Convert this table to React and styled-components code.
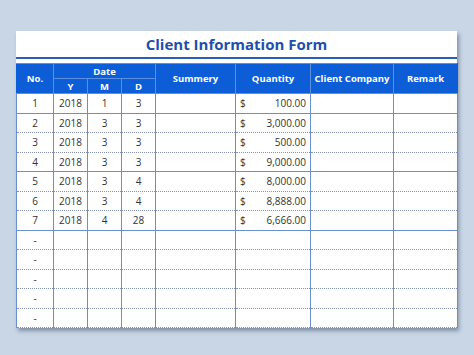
import React from "react";
import styled, { createGlobalStyle } from "styled-components";

const Global = createGlobalStyle`
  html, body { margin: 0; padding: 0; }
  body {
    background: #c9d6e6;
    width: 474px;
    height: 355px;
    overflow: hidden;
    font-family: "Open Sans", "Noto Sans", sans-serif;
  }
`;

const Page = styled.div`
  padding: 31px 0 0 16px;
`;

const Card = styled.div`
  width: 441px;
  background: #fff;
  box-shadow: 2px 3px 4px rgba(40, 60, 90, 0.45);
`;

const TitleBar = styled.div`
  height: 26px;
  display: flex;
  align-items: center;
  justify-content: center;
  border-bottom: 2px solid #2a5cc0;
  margin-bottom: 4px;
`;

const Title = styled.h1`
  margin: 0;
  font-size: 15px;
  font-weight: 700;
  color: #1e4fae;
  letter-spacing: 0;
`;

const Table = styled.table`
  width: 441px;
  table-layout: fixed;
  border-collapse: collapse;
  font-size: 10px;
`;

const HeadCell = styled.th`
  background: #0d5ed6;
  color: #fff;
  font-weight: 700;
  font-size: 9.5px;
  height: 14px;
  padding: 0;
  border: 1px solid #5a90e2;
  text-align: center;
  white-space: nowrap;
  &:first-child { border-left-color: #0d5ed6; }
  &:last-child { border-right-color: #0d5ed6; }
`;

const Row = styled.tr`
  height: 19.5px;
`;

const Cell = styled.td`
  padding: 0 ${(p) => (p.$pad ? "4px" : "0")};
  color: #333;
  text-align: ${(p) => p.$align || "center"};
  border-left: 1px solid ${(p) => (p.$gray ? "#98a4bb" : "#6b8fce")};
  border-right: 1px solid #6b8fce;
  border-bottom: 1px ${(p) => (p.$solid ? "solid #6b8fce" : "dotted #8593b4")};
  white-space: nowrap;
  overflow: hidden;
`;

const Money = styled.div`
  display: flex;
  justify-content: space-between;
  align-items: center;
`;

const rows = [
  ["1", "2018", "1", "3", "100.00"],
  ["2", "2018", "3", "3", "3,000.00"],
  ["3", "2018", "3", "3", "500.00"],
  ["4", "2018", "3", "3", "9,000.00"],
  ["5", "2018", "3", "4", "8,000.00"],
  ["6", "2018", "3", "4", "8,888.00"],
  ["7", "2018", "4", "28", "6,666.00"],
  ["-", "", "", "", ""],
  ["-", "", "", "", ""],
  ["-", "", "", "", ""],
  ["-", "", "", "", ""],
  ["-", "", "", "", ""],
];

export default function App() {
  return (
    <>
      <Global />
      <Page>
        <Card>
          <TitleBar>
            <Title>Client Information Form</Title>
          </TitleBar>
          <Table>
            <colgroup>
              <col style={{ width: 37 }} />
              <col style={{ width: 34 }} />
              <col style={{ width: 34 }} />
              <col style={{ width: 34 }} />
              <col style={{ width: 80 }} />
              <col style={{ width: 75 }} />
              <col style={{ width: 83 }} />
              <col style={{ width: 64 }} />
            </colgroup>
            <thead>
              <tr>
                <HeadCell rowSpan={2}>No.</HeadCell>
                <HeadCell colSpan={3}>Date</HeadCell>
                <HeadCell rowSpan={2}>Summery</HeadCell>
                <HeadCell rowSpan={2}>Quantity</HeadCell>
                <HeadCell rowSpan={2}>Client Company</HeadCell>
                <HeadCell rowSpan={2}>Remark</HeadCell>
              </tr>
              <tr>
                <HeadCell>Y</HeadCell>
                <HeadCell>M</HeadCell>
                <HeadCell>D</HeadCell>
              </tr>
            </thead>
            <tbody>
              {rows.map((r, i) => {
                const solid = i === 0 || i === 3 || i === 6;
                return (
                  <Row key={i}>
                    <Cell $solid={solid}>{r[0]}</Cell>
                    <Cell $solid={solid}>{r[1]}</Cell>
                    <Cell $solid={solid}>{r[2]}</Cell>
                    <Cell $solid={solid}>{r[3]}</Cell>
                    <Cell $solid={solid} />
                    <Cell $solid={solid} $pad>
                      {r[4] && (
                        <Money>
                          <span>$</span>
                          <span>{r[4]}</span>
                        </Money>
                      )}
                    </Cell>
                    <Cell $solid={solid} />
                    <Cell $solid={solid} $gray />
                  </Row>
                );
              })}
            </tbody>
          </Table>
        </Card>
      </Page>
    </>
  );
}
